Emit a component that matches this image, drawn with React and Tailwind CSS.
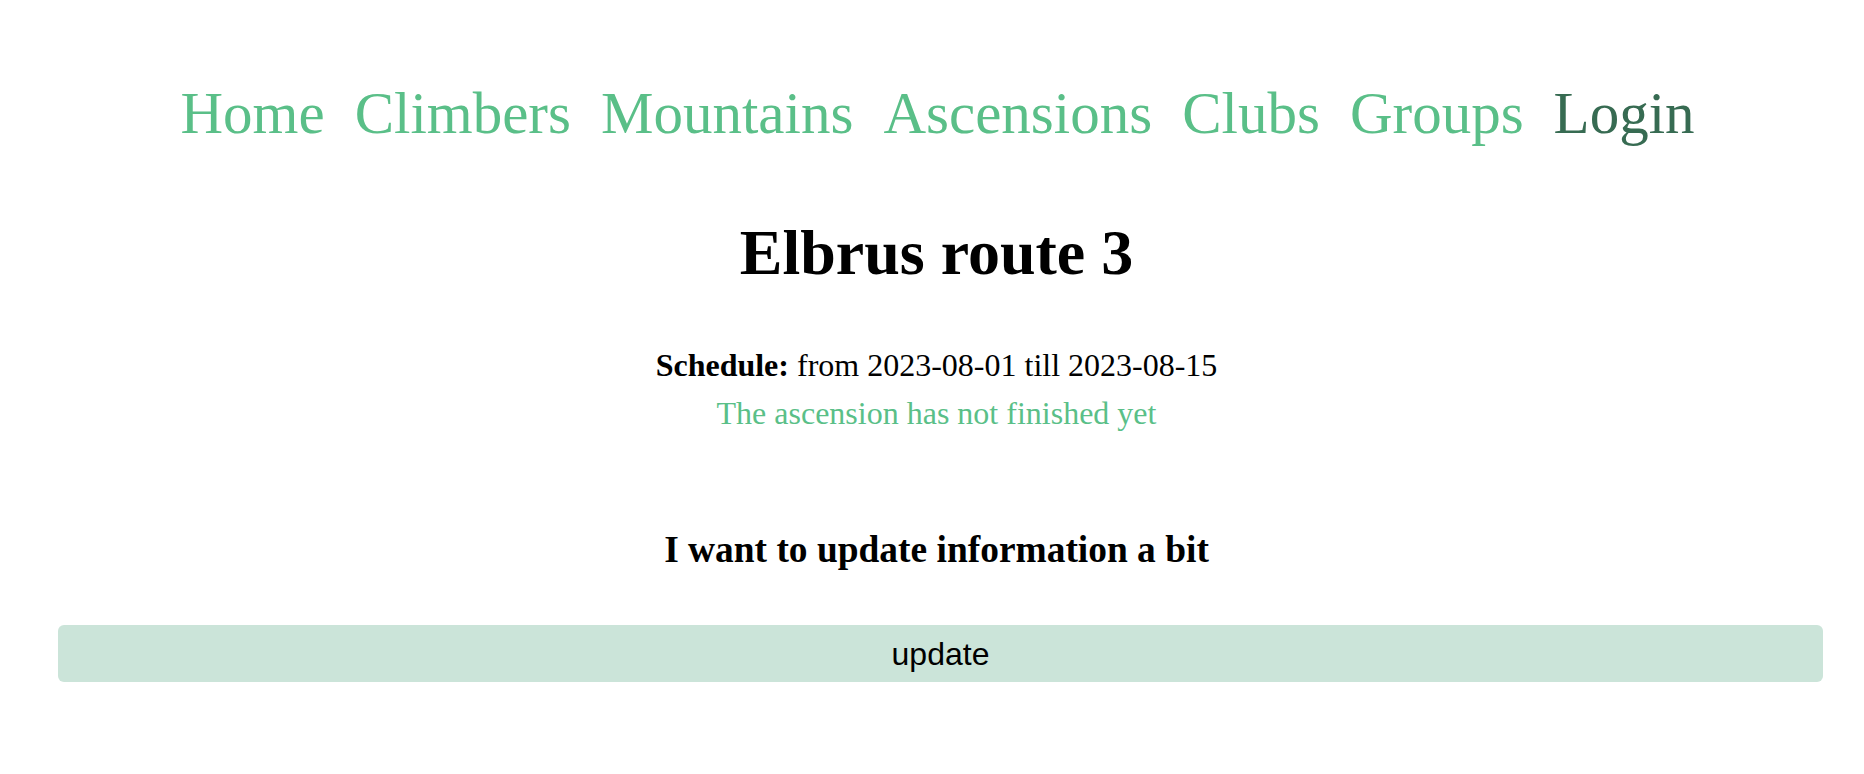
import React from "react";

const links = ["Home", "Climbers", "Mountains", "Ascensions", "Clubs", "Groups"];

export default function App() {
  return (
    <div className="min-h-[774px] bg-white text-black font-['Liberation_Serif','Times_New_Roman',serif]">
      <nav className="pt-[83px] flex justify-center gap-[30px] pl-[11px] text-[59px] leading-[60px]">
        {links.map((l) => (
          <a key={l} href="#" className="text-[#5abf88]">
            {l}
          </a>
        ))}
        <a href="#" className="text-[#376b52]">
          Login
        </a>
      </nav>
      <div className="pl-[9px]">
        <h1 className="mt-[78px] text-center text-[64px] leading-[64px] font-bold">
          Elbrus route 3
        </h1>
        <div className="mt-[56px] text-center text-[32px] leading-[48px]">
          <p>
            <span className="font-bold">Schedule:</span> from 2023-08-01 till 2023-08-15
          </p>
          <p className="text-[#5abf88]">The ascension has not finished yet</p>
        </div>
        <h3 className="mt-[91px] text-center text-[37.44px] leading-[44px] font-bold">
          I want to update information a bit
        </h3>
      </div>
      <div className="mt-[53px] pl-[58px] pr-[41px]">
        <button className="w-full h-[57px] rounded-[6px] bg-[#cbe4d9] text-black text-[32px] font-['Liberation_Sans',Arial,sans-serif]">
          update
        </button>
      </div>
    </div>
  );
}
